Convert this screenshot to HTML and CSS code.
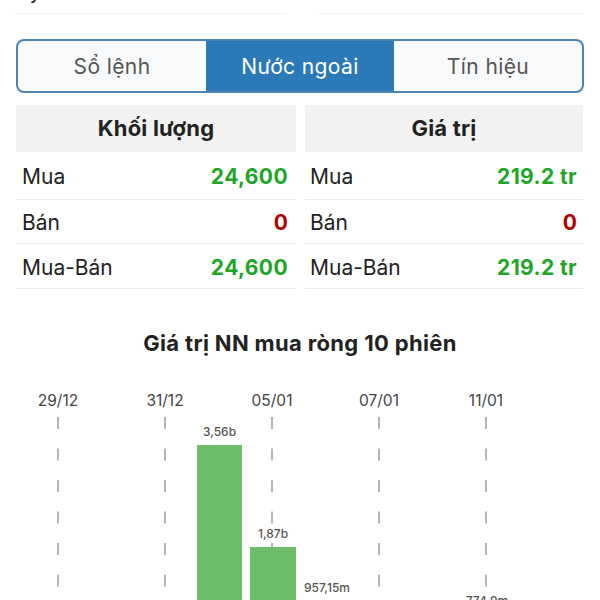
FILE: index.html
```html
<html>
  <head>
    <title>Nước ngoài</title>
    <link rel="stylesheet" href="styles.css">
  </head>
  <body>
    <div class="info">
      <div class="info-cell">Tỷ suất</div>
      <div class="info-cell"></div>
    </div>

    <div class="tabs">
      <div class="tab">Sổ lệnh</div>
      <div class="tab active">Nước ngoài</div>
      <div class="tab">Tín hiệu</div>
    </div>

    <div class="stats">
      <div class="stat-table">
        <div class="stat-head">Khối lượng</div>
        <div class="stat-row"><span>Mua</span><span class="up">24,600</span></div>
        <div class="stat-row"><span>Bán</span><span class="down">0</span></div>
        <div class="stat-row"><span>Mua-Bán</span><span class="up">24,600</span></div>
      </div>
      <div class="stat-table right">
        <div class="stat-head">Giá trị</div>
        <div class="stat-row"><span>Mua</span><span class="up">219.2 tr</span></div>
        <div class="stat-row"><span>Bán</span><span class="down">0</span></div>
        <div class="stat-row"><span>Mua-Bán</span><span class="up">219.2 tr</span></div>
      </div>
    </div>

    <div class="chart-title">Giá trị NN mua ròng 10 phiên</div>

    <svg class="chart" width="600" height="250" viewBox="0 370 600 250">
      <g class="dates">
        <text x="58" y="405">29/12</text>
        <text x="165" y="405">31/12</text>
        <text x="272" y="405">05/01</text>
        <text x="379" y="405">07/01</text>
        <text x="486" y="405">11/01</text>
      </g>
      <g class="grid">
        <line x1="58" y1="416" x2="58" y2="620"></line>
        <line x1="165" y1="416" x2="165" y2="620"></line>
        <line x1="272" y1="416" x2="272" y2="620"></line>
        <line x1="379" y1="416" x2="379" y2="620"></line>
        <line x1="486" y1="416" x2="486" y2="620"></line>
      </g>
      <g class="bars">
        <rect x="197" y="444" width="45" height="215"></rect>
        <rect x="250" y="546" width="46" height="113"></rect>
        <rect x="303" y="601" width="46" height="58"></rect>
        <rect x="464" y="612" width="45" height="47"></rect>
      </g>
      <g class="values">
        <text x="219.5" y="435">3,56b</text>
        <text x="273" y="537">1,87b</text>
        <text x="327" y="591">957,15m</text>
        <text x="487" y="604">774,9m</text>
      </g>
    </svg>
  </body>
</html>
```

FILE: styles.css
```css
body {
  margin: 0;
  font-family: Inter, Roboto, "Liberation Sans", sans-serif;
  color: #222;
  background: #fff;
}

.info {
  display: flex;
  margin-top: -20px;
}
.info-cell {
  box-sizing: border-box;
  height: 34px;
  padding: 2px 0 0 3px;
  line-height: 20px;
  font-size: 20px;
  border-bottom: 1px solid #f0f0f0;
  margin-left: 15px;
  width: 271px;
}
.info-cell + .info-cell {
  margin-left: 32px;
  width: 266px;
}

.tabs {
  display: grid;
  grid-template-columns: 1fr 1fr 1fr;
  margin: 25px 16px 0 16px;
  height: 54px;
  box-sizing: border-box;
  border: 2px solid #4e84b1;
  border-radius: 8px;
  overflow: hidden;
  background: #f7f9fa;
}
.tab {
  display: flex;
  align-items: center;
  justify-content: center;
  font-size: 21px;
  letter-spacing: 0.4px;
  color: #555;
}
.tab.active {
  background: #2b7ab7;
  color: #fff;
}

.stats {
  display: grid;
  grid-template-columns: 280px 278px;
  column-gap: 9px;
  margin: 12px 0 0 16px;
}
.stat-head {
  height: 47px;
  line-height: 47px;
  background: #f2f2f2;
  text-align: center;
  font-weight: bold;
  font-size: 22px;
  letter-spacing: 0.2px;
  color: #222;
}
.stat-row {
  display: flex;
  justify-content: space-between;
  align-items: center;
  height: 44px;
  padding: 2px 8px 0 6px;
  box-sizing: border-box;
  font-size: 21px;
  border-bottom: 1px solid #ececec;
}
.stat-table .stat-row:nth-child(2) {
  height: 48px;
}
.stat-table .stat-row:nth-child(4) {
  height: 45px;
}
.right .stat-row {
  padding: 2px 6px 0 5px;
}
.up {
  color: #20a526;
  font-weight: bold;
  letter-spacing: 0.4px;
}
.down {
  color: #b00000;
  font-weight: bold;
}

.chart-title {
  margin-top: 42px;
  text-align: center;
  font-weight: bold;
  font-size: 22px;
  letter-spacing: 0.35px;
  line-height: 24px;
}
.chart {
  display: block;
  margin-top: 16px;
}
.dates text {
  font-size: 15.5px;
  fill: #444;
  text-anchor: middle;
}
.grid line {
  stroke: #9d9d9d;
  stroke-width: 1.5;
  stroke-dasharray: 12 19.5;
}
.bars rect {
  fill: #6dbd6a;
}
.values text {
  font-size: 12px;
  font-weight: 500;
  fill: #555;
  text-anchor: middle;
}
```
